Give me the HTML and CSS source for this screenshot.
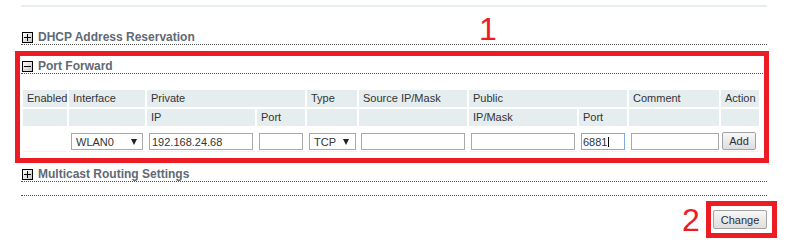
FILE: index.html
```html
<!DOCTYPE html>
<html>
<head>
<meta charset="utf-8">
<link rel="stylesheet" href="styles.css">
</head>
<body>
<div class="page">
  <div class="topline"></div>

  <div class="sect-head first">
    <svg class="tog" width="11" height="11" viewBox="0 0 11 11"><defs><linearGradient id="g1" x1="0" y1="0" x2="1" y2="1"><stop offset="0" stop-color="#ffffff"/><stop offset="1" stop-color="#c4c4c4"/></linearGradient></defs><rect x="0.5" y="0.5" width="10" height="10" fill="url(#g1)" stroke="#000"/><path d="M2 5.5h7M5.5 2v7" stroke="#000"/></svg>
    <span>DHCP Address Reservation</span>
  </div>

  <div class="sect-head">
    <svg class="tog" width="11" height="11" viewBox="0 0 11 11"><defs><linearGradient id="g2" x1="0" y1="0" x2="1" y2="1"><stop offset="0" stop-color="#ffffff"/><stop offset="1" stop-color="#c4c4c4"/></linearGradient></defs><rect x="0.5" y="0.5" width="10" height="10" fill="url(#g2)" stroke="#000"/><path d="M2 5.5h7" stroke="#000"/></svg>
    <span>Port Forward</span>
  </div>

  <table class="pf">
    <colgroup>
      <col style="width:44px"><col style="width:76px"><col style="width:108px"><col style="width:48px"><col style="width:50px"><col style="width:108px"><col style="width:108px"><col style="width:48px"><col style="width:90px"><col style="width:38px">
    </colgroup>
    <tr class="hd">
      <td>Enabled</td><td>Interface</td><td colspan="2">Private</td><td>Type</td><td>Source IP/Mask</td><td colspan="2">Public</td><td>Comment</td><td>Action</td>
    </tr>
    <tr class="hd">
      <td></td><td></td><td>IP</td><td>Port</td><td></td><td></td><td>IP/Mask</td><td>Port</td><td></td><td></td>
    </tr>
    <tr class="inp">
      <td></td>
      <td><span class="selwrap"><select class="sel w-if"><option>WLAN0</option></select></span></td>
      <td><input class="txt w-ip" type="text" value="192.168.24.68"></td>
      <td><input class="txt w-port" type="text"></td>
      <td><span class="selwrap"><select class="sel w-type"><option>TCP</option></select></span></td>
      <td><input class="txt w-ip" type="text"></td>
      <td><input class="txt w-ip" type="text"></td>
      <td><span class="focuswrap"><input class="txt w-port focused" type="text" value="6881"><span class="caret"></span></span></td>
      <td><input class="txt w-cmt" type="text"></td>
      <td class="act"><button class="btn add">Add</button></td>
    </tr>
  </table>

  <div class="sect-head multi">
    <svg class="tog" width="11" height="11" viewBox="0 0 11 11"><defs><linearGradient id="g3" x1="0" y1="0" x2="1" y2="1"><stop offset="0" stop-color="#ffffff"/><stop offset="1" stop-color="#c4c4c4"/></linearGradient></defs><rect x="0.5" y="0.5" width="10" height="10" fill="url(#g3)" stroke="#000"/><path d="M2 5.5h7M5.5 2v7" stroke="#000"/></svg>
    <span>Multicast Routing Settings</span>
  </div>
  <div class="rule"></div>

  <div class="actions">
    <button class="btn change">Change</button>
  </div>
</div>

<div class="mark mark-box1"></div>
<div class="mark mark-box2"></div>
<div class="num num1">1</div>
<div class="num num2">2</div>
</body>
</html>
```

FILE: styles.css
```css
html, body {
  margin: 0;
  padding: 0;
  background: #ffffff;
}

body {
  font-family: "Liberation Sans", Arial, sans-serif;
  color: #333333;
}

.page {
  margin-left: 21px;
  width: 746px;
  padding-top: 5px;
}

.topline {
  border-top: 2px solid #e8eeee;
}

.sect-head {
  margin-top: 14px;
  height: 14px;
  border-bottom: 1px dotted #555555;
  display: flex;
  align-items: center;
  gap: 5px;
  padding-left: 1px;
  font-size: 12px;
  font-weight: bold;
  color: #5f6975;
  line-height: 14px;
}

.sect-head.first {
  margin-top: 23px;
}

.sect-head.multi {
  margin-top: 13px;
}

.tog {
  display: block;
  flex: none;
}

.pf {
  margin-top: 14px;
  table-layout: fixed;
  border-collapse: separate;
  border-spacing: 2px;
  width: 740px;
  margin-left: 0;
  font-size: 11px;
  color: #333333;
}

.pf td {
  padding: 0 4px;
  box-sizing: border-box;
  white-space: nowrap;
  overflow: visible;
}

.pf tr.hd td {
  background: #e6edef;
  height: 17px;
  line-height: 17px;
}

.pf tr.inp td {
  background: #ffffff;
  padding: 5px 2px 1px;
  border-bottom: 1px solid #eef2f3;
  vertical-align: top;
}

.pf tr.inp td.act {
  padding: 4px 0 0 1px;
}

.txt {
  display: block;
  box-sizing: border-box;
  height: 17px;
  margin: 0;
  border: 1px solid #a9a9a9;
  padding: 0 2px;
  font-family: "Liberation Sans", Arial, sans-serif;
  font-size: 11px;
  color: #333333;
  background: #ffffff;
  outline: none;
}

.w-ip { width: 104px; }
.w-port { width: 44px; }
.w-cmt { width: 88px; }

.txt.focused {
  border-color: #7fa9dd;
  padding-left: 1px;
}

.focuswrap {
  position: relative;
  display: block;
}

.caret {
  position: absolute;
  left: 27px;
  top: 4px;
  width: 1px;
  height: 10px;
  background: #000000;
}

.selwrap {
  position: relative;
  display: block;
}

.selwrap::after {
  content: "";
  position: absolute;
  right: 6px;
  top: 6px;
  width: 0;
  height: 0;
  border-left: 3.5px solid transparent;
  border-right: 3.5px solid transparent;
  border-top: 6px solid #222222;
  pointer-events: none;
}

.sel {
  display: block;
  box-sizing: border-box;
  height: 17px;
  margin: 0;
  -webkit-appearance: none;
  appearance: none;
  border: 1px solid #a9a9a9;
  border-radius: 0;
  padding: 0 0 0 4px;
  font-family: "Liberation Sans", Arial, sans-serif;
  font-size: 11px;
  color: #333333;
  background: #ffffff;
  outline: none;
}

.w-if { width: 72px; }
.w-type { width: 47px; }

.btn {
  box-sizing: border-box;
  margin: 0;
  padding: 0;
  border: 1px solid #a3a3a3;
  border-radius: 2px;
  background: linear-gradient(#f7f7f7, #dedede);
  font-family: "Liberation Sans", Arial, sans-serif;
  font-size: 11px;
  color: #2b2f36;
}

.btn.add {
  width: 34px;
  height: 18px;
}

.rule {
  height: 13px;
  border-bottom: 1px dotted #555555;
}

.actions {
  margin-top: 14px;
  display: flex;
  justify-content: flex-end;
}

.btn.change {
  width: 54px;
  height: 19px;
}

.mark {
  position: absolute;
  box-sizing: border-box;
  border: 5px solid #ed1c24;
}

.mark-box1 {
  left: 15px;
  top: 51px;
  width: 754px;
  height: 112px;
}

.mark-box2 {
  left: 706px;
  top: 201px;
  width: 71px;
  height: 37px;
}

.num {
  position: absolute;
  font-family: "Liberation Sans", Arial, sans-serif;
  font-size: 32px;
  line-height: 32px;
  color: #ed1c24;
}

.num1 {
  left: 479px;
  top: 13px;
}

.num2 {
  left: 682px;
  top: 204px;
}
```
